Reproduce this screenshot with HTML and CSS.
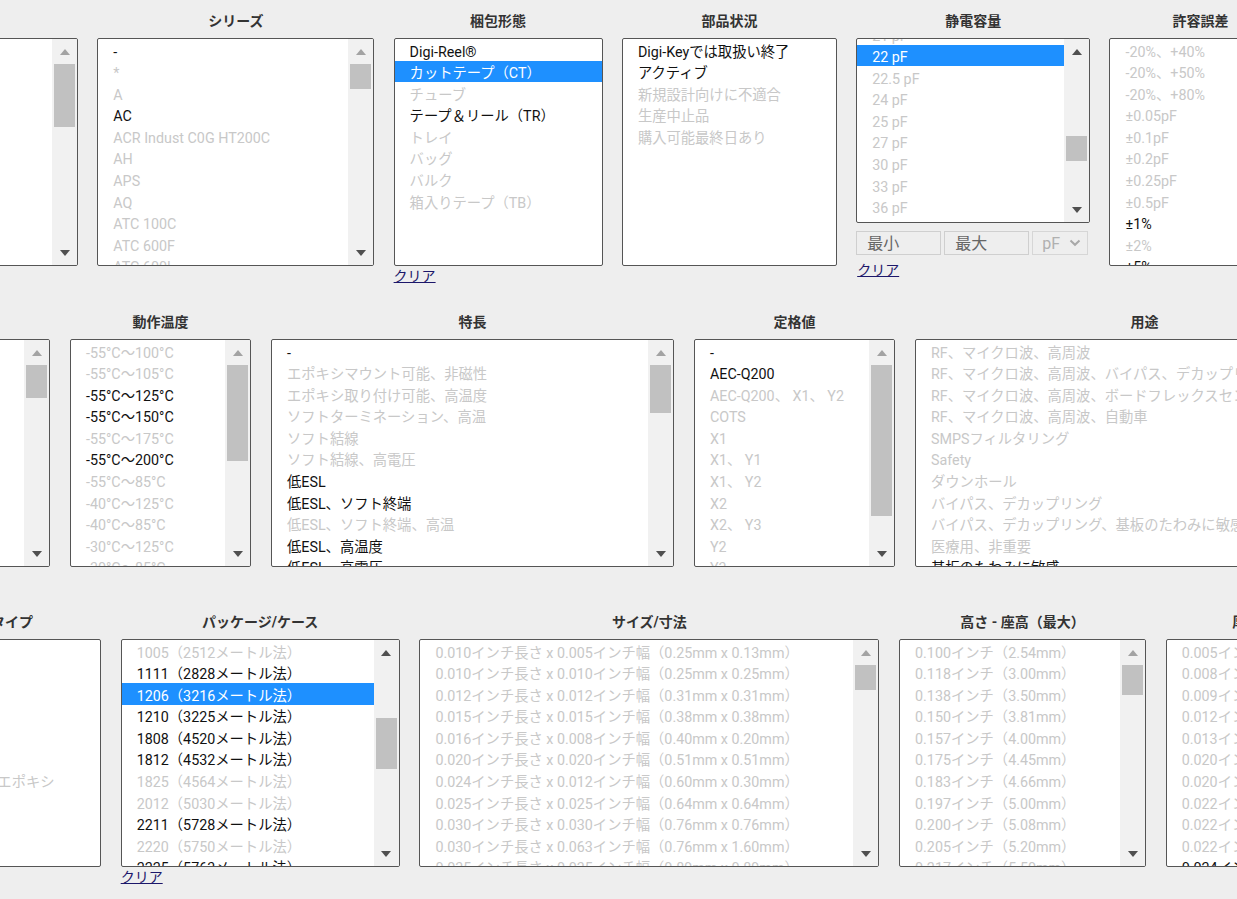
FILE: index.html
```html
<!DOCTYPE html>
<html lang="ja">
<head>
<meta charset="utf-8">
<title>フィルタ</title>
<link rel="stylesheet" href="styles.css">
</head>
<body>
<div class="page">

  <div class="row r1">
    <div class="panel w-mfr">
      <div class="ptitle">メーカー</div>
      <div class="box">
        <ul class="list">
          <li>AVX Corporation</li><li>Cal-Chip Electronics</li><li>Johanson Dielectrics</li><li class="on">KEMET</li><li>Knowles Novacap</li><li>Knowles Syfer</li><li class="on">KYOCERA AVX</li><li class="on">Murata Electronics</li><li>Taiyo Yuden</li><li>TDK Corporation</li><li>Vishay Vitramon</li>
        </ul>
        <div class="sb"><div class="sb-btn sb-up off"></div><div class="sb-track"><div class="thumb" style="margin-top:0;height:63px"></div></div><div class="sb-btn sb-down"></div></div>
      </div>
    </div>

    <div class="panel w-series">
      <div class="ptitle">シリーズ</div>
      <div class="box">
        <ul class="list">
          <li class="on">-</li><li>*</li><li>A</li><li class="on">AC</li><li>ACR Indust C0G HT200C</li><li>AH</li><li>APS</li><li>AQ</li><li>ATC 100C</li><li>ATC 600F</li><li>ATC 600L</li>
        </ul>
        <div class="sb"><div class="sb-btn sb-up off"></div><div class="sb-track"><div class="thumb" style="margin-top:0;height:25px"></div></div><div class="sb-btn sb-down"></div></div>
      </div>
    </div>

    <div class="panel w-pack">
      <div class="ptitle">梱包形態</div>
      <div class="box">
        <ul class="list">
          <li class="on">Digi-Reel®</li><li class="sel">カットテープ（CT）</li><li>チューブ</li><li class="on">テープ＆リール（TR）</li><li>トレイ</li><li>バッグ</li><li>バルク</li><li>箱入りテープ（TB）</li>
        </ul>
      </div>
      <a class="clear" href="#">クリア</a>
    </div>

    <div class="panel w-status">
      <div class="ptitle">部品状況</div>
      <div class="box">
        <ul class="list">
          <li class="on">Digi-Keyでは取扱い終了</li><li class="on">アクティブ</li><li>新規設計向けに不適合</li><li>生産中止品</li><li>購入可能最終日あり</li>
        </ul>
      </div>
    </div>

    <div class="panel w-cap">
      <div class="ptitle">静電容量</div>
      <div class="box short">
        <ul class="list shift">
          <li>21 pF</li><li class="sel">22 pF</li><li>22.5 pF</li><li>24 pF</li><li>25 pF</li><li>27 pF</li><li>30 pF</li><li>33 pF</li><li>36 pF</li>
        </ul>
        <div class="sb"><div class="sb-btn sb-up"></div><div class="sb-track"><div class="thumb" style="margin-top:72px;height:25px"></div></div><div class="sb-btn sb-down"></div></div>
      </div>
      <div class="range">
        <input class="inp inp-min" type="text" placeholder="最小">
        <input class="inp inp-max" type="text" placeholder="最大">
        <div class="unit">pF<svg class="chev" width="12" height="8" viewBox="0 0 12 8"><polyline points="1.5,1.5 6,5.8 10.5,1.5" fill="none" stroke="#a8a8a8" stroke-width="2"/></svg></div>
      </div>
      <a class="clear clear-cap" href="#">クリア</a>
    </div>

    <div class="panel w-tol">
      <div class="ptitle">許容誤差</div>
      <div class="box">
        <ul class="list">
          <li>-20%、+40%</li><li>-20%、+50%</li><li>-20%、+80%</li><li>±0.05pF</li><li>±0.1pF</li><li>±0.2pF</li><li>±0.25pF</li><li>±0.5pF</li><li class="on">±1%</li><li>±2%</li><li class="on">±5%</li>
        </ul>
        <div class="sb"><div class="sb-btn sb-up off"></div><div class="sb-track"><div class="thumb" style="margin-top:0;height:40px"></div></div><div class="sb-btn sb-down"></div></div>
      </div>
    </div>
  </div>

  <div class="row r2">
    <div class="panel w-tc">
      <div class="ptitle">温度係数</div>
      <div class="box">
        <ul class="list">
          <li>C0G、NP0</li><li>C0H</li><li>U2J</li><li>X5R</li><li>X6S</li><li>X7R</li><li>X7S</li><li>X8R</li><li>Y5V（F）</li><li>Z5U</li><li>BX</li>
        </ul>
        <div class="sb"><div class="sb-btn sb-up off"></div><div class="sb-track"><div class="thumb" style="margin-top:0;height:33px"></div></div><div class="sb-btn sb-down"></div></div>
      </div>
    </div>

    <div class="panel w-optemp">
      <div class="ptitle">動作温度</div>
      <div class="box">
        <ul class="list">
          <li>-55°C～100°C</li><li>-55°C～105°C</li><li class="on">-55°C～125°C</li><li class="on">-55°C～150°C</li><li>-55°C～175°C</li><li class="on">-55°C～200°C</li><li>-55°C～85°C</li><li>-40°C～125°C</li><li>-40°C～85°C</li><li>-30°C～125°C</li><li>-30°C～85°C</li>
        </ul>
        <div class="sb"><div class="sb-btn sb-up off"></div><div class="sb-track"><div class="thumb" style="margin-top:0;height:96px"></div></div><div class="sb-btn sb-down"></div></div>
      </div>
    </div>

    <div class="panel w-feat">
      <div class="ptitle">特長</div>
      <div class="box">
        <ul class="list">
          <li class="on">-</li><li>エポキシマウント可能、非磁性</li><li>エポキシ取り付け可能、高温度</li><li>ソフトターミネーション、高温</li><li>ソフト結線</li><li>ソフト結線、高電圧</li><li class="on">低ESL</li><li class="on">低ESL、ソフト終端</li><li>低ESL、ソフト終端、高温</li><li class="on">低ESL、高温度</li><li class="on">低ESL、高電圧</li>
        </ul>
        <div class="sb"><div class="sb-btn sb-up off"></div><div class="sb-track"><div class="thumb" style="margin-top:0;height:48px"></div></div><div class="sb-btn sb-down"></div></div>
      </div>
    </div>

    <div class="panel w-rating">
      <div class="ptitle">定格値</div>
      <div class="box">
        <ul class="list">
          <li class="on">-</li><li class="on">AEC-Q200</li><li>AEC-Q200、 X1、 Y2</li><li>COTS</li><li>X1</li><li>X1、 Y1</li><li>X1、 Y2</li><li>X2</li><li>X2、 Y3</li><li>Y2</li><li>Y3</li>
        </ul>
        <div class="sb"><div class="sb-btn sb-up off"></div><div class="sb-track"><div class="thumb" style="margin-top:0;height:151px"></div></div><div class="sb-btn sb-down"></div></div>
      </div>
    </div>

    <div class="panel w-app">
      <div class="ptitle">用途</div>
      <div class="box">
        <ul class="list">
          <li>RF、マイクロ波、高周波</li><li>RF、マイクロ波、高周波、バイパス、デカップリング</li><li>RF、マイクロ波、高周波、ボードフレックスセンシティブ</li><li>RF、マイクロ波、高周波、自動車</li><li>SMPSフィルタリング</li><li>Safety</li><li>ダウンホール</li><li>バイパス、デカップリング</li><li>バイパス、デカップリング、基板のたわみに敏感</li><li>医療用、非重要</li><li class="on">基板のたわみに敏感</li>
        </ul>
        <div class="sb"><div class="sb-btn sb-up off"></div><div class="sb-track"><div class="thumb" style="margin-top:0;height:60px"></div></div><div class="sb-btn sb-down"></div></div>
      </div>
    </div>
  </div>

  <div class="row r3">
    <div class="panel w-mount">
      <div class="ptitle">取り付けタイプ</div>
      <div class="box">
        <ul class="list">
          <li>シャーシマウント</li><li>スルーホール</li><li>フリーハンギング</li><li>パネルマウント</li><li>表面実装</li><li>表面実装、MLCC</li><li>表面実装、導電性エポキシ</li><li>表面実装、直角</li><li>表面実装、逆配置</li><li>表面実装、薄型</li>
        </ul>
      </div>
    </div>

    <div class="panel w-pkg">
      <div class="ptitle">パッケージ/ケース</div>
      <div class="box">
        <ul class="list">
          <li>1005（2512メートル法）</li><li class="on">1111（2828メートル法）</li><li class="sel">1206（3216メートル法）</li><li class="on">1210（3225メートル法）</li><li class="on">1808（4520メートル法）</li><li class="on">1812（4532メートル法）</li><li>1825（4564メートル法）</li><li>2012（5030メートル法）</li><li class="on">2211（5728メートル法）</li><li>2220（5750メートル法）</li><li class="on">2225（5763メートル法）</li>
        </ul>
        <div class="sb"><div class="sb-btn sb-up"></div><div class="sb-track"><div class="thumb" style="margin-top:53px;height:51px"></div></div><div class="sb-btn sb-down"></div></div>
      </div>
      <a class="clear" href="#">クリア</a>
    </div>

    <div class="panel w-size">
      <div class="ptitle">サイズ/寸法</div>
      <div class="box">
        <ul class="list">
          <li>0.010インチ長さ x 0.005インチ幅（0.25mm x 0.13mm）</li>
          <li>0.010インチ長さ x 0.010インチ幅（0.25mm x 0.25mm）</li>
          <li>0.012インチ長さ x 0.012インチ幅（0.31mm x 0.31mm）</li>
          <li>0.015インチ長さ x 0.015インチ幅（0.38mm x 0.38mm）</li>
          <li>0.016インチ長さ x 0.008インチ幅（0.40mm x 0.20mm）</li>
          <li>0.020インチ長さ x 0.020インチ幅（0.51mm x 0.51mm）</li>
          <li>0.024インチ長さ x 0.012インチ幅（0.60mm x 0.30mm）</li>
          <li>0.025インチ長さ x 0.025インチ幅（0.64mm x 0.64mm）</li>
          <li>0.030インチ長さ x 0.030インチ幅（0.76mm x 0.76mm）</li>
          <li>0.030インチ長さ x 0.063インチ幅（0.76mm x 1.60mm）</li>
          <li>0.035インチ長さ x 0.035インチ幅（0.89mm x 0.89mm）</li>
        </ul>
        <div class="sb"><div class="sb-btn sb-up off"></div><div class="sb-track"><div class="thumb" style="margin-top:0;height:25px"></div></div><div class="sb-btn sb-down"></div></div>
      </div>
    </div>

    <div class="panel w-height">
      <div class="ptitle">高さ - 座高（最大）</div>
      <div class="box">
        <ul class="list">
          <li>0.100インチ（2.54mm）</li><li>0.118インチ（3.00mm）</li><li>0.138インチ（3.50mm）</li><li>0.150インチ（3.81mm）</li><li>0.157インチ（4.00mm）</li><li>0.175インチ（4.45mm）</li><li>0.183インチ（4.66mm）</li><li>0.197インチ（5.00mm）</li><li>0.200インチ（5.08mm）</li><li>0.205インチ（5.20mm）</li><li>0.217インチ（5.50mm）</li>
        </ul>
        <div class="sb"><div class="sb-btn sb-up off"></div><div class="sb-track"><div class="thumb" style="margin-top:0;height:30px"></div></div><div class="sb-btn sb-down"></div></div>
      </div>
    </div>

    <div class="panel w-thick">
      <div class="ptitle">厚さ（最大）</div>
      <div class="box">
        <ul class="list">
          <li>0.005インチ（0.13mm）</li><li>0.008インチ（0.20mm）</li><li>0.009インチ（0.23mm）</li><li>0.012インチ（0.30mm）</li><li>0.013インチ（0.33mm）</li><li>0.020インチ（0.50mm）</li><li>0.020インチ（0.51mm）</li><li>0.022インチ（0.55mm）</li><li>0.022インチ（0.56mm）</li><li>0.022インチ（0.57mm）</li><li class="on">0.024インチ（0.60mm）</li>
        </ul>
        <div class="sb"><div class="sb-btn sb-up off"></div><div class="sb-track"><div class="thumb" style="margin-top:0;height:28px"></div></div><div class="sb-btn sb-down"></div></div>
      </div>
    </div>
  </div>

</div>
</body>
</html>
```
FILE: styles.css
```css
html, body {
  margin: 0;
  padding: 0;
  overflow: hidden;
  background: #eeeeee;
}

body {
  width: 1237px;
  height: 899px;
  font-family: Roboto, "Noto Sans CJK JP", sans-serif;
  font-size: 14px;
  color: #111;
}

.page {
  width: 1237px;
  height: 899px;
  overflow: hidden;
}

.row {
  display: flex;
  align-items: flex-start;
  box-sizing: border-box;
  height: 300px;
  padding-top: 11px;
}

.r1 { height: 301px; gap: 19.3px; margin-left: -172px; }
.r2 { gap: 20px; margin-left: -150px; }
.r3 { gap: 19.7px; margin-left: -133px; }

.panel {
  flex: none;
  display: flex;
  flex-direction: column;
}

.w-mfr { width: 250px; }
.w-series { width: 277px; }
.w-pack { width: 209px; }
.w-status { width: 215px; }
.w-cap { width: 234px; }
.w-tol { width: 182px; }

.w-tc { width: 200px; }
.w-optemp { width: 181px; }
.w-feat { width: 403px; }
.w-rating { width: 201px; }
.w-app { width: 459px; }

.w-mount { width: 234px; }
.w-pkg { width: 279px; }
.w-size { width: 460px; }
.w-height { width: 247px; }
.w-thick { width: 217px; }

.ptitle {
  height: 20px;
  line-height: 20px;
  margin-bottom: 7px;
  text-align: center;
  font-weight: bold;
  color: #333;
  white-space: nowrap;
}

.box {
  box-sizing: border-box;
  height: 228px;
  border: 1px solid #555;
  border-radius: 2px;
  background: #fff;
  display: flex;
  overflow: hidden;
}

.box.short { height: 185px; }

.list {
  flex: 1;
  min-width: 0;
  margin: 0;
  padding: 0;
  list-style: none;
  overflow: hidden;
}

.list.shift { margin-top: -16px; }

.list li {
  box-sizing: border-box;
  height: 21.6px;
  line-height: 21.6px;
  padding-top: 2.5px;
  padding-left: 15px;
  white-space: nowrap;
  font-size: 14.3px;
  color: #c8c8c8;
}

.list li.on { color: #111; }

.list li.sel {
  background: #1e90ff;
  color: #fff;
}

.sb {
  flex: none;
  width: 25px;
  background: #f1f1f1;
  display: flex;
  flex-direction: column;
}

.sb-btn {
  flex: none;
  height: 25px;
  display: flex;
  align-items: center;
  justify-content: center;
}

.sb-btn::before {
  content: "";
  width: 0;
  height: 0;
  border-left: 5.5px solid transparent;
  border-right: 5.5px solid transparent;
}

.sb-up::before { border-bottom: 6px solid #505050; }
.sb-up.off::before { border-bottom-color: #a3a3a3; }
.sb-down::before { border-top: 6px solid #505050; }

.sb-track {
  flex: 1;
  min-height: 0;
}

.thumb {
  margin-left: 2px;
  width: 21px;
  background: #c1c1c1;
}

.clear {
  align-self: flex-start;
  display: block;
  line-height: 20px;
  color: #1c176a;
  text-decoration: underline;
}

.clear-cap { margin-top: 5px; margin-left: 1px; }

.range {
  display: flex;
  gap: 3px;
  margin-top: 8px;
  height: 24px;
}

.inp {
  box-sizing: border-box;
  height: 24px;
  width: 85px;
  margin: 0;
  padding: 0 0 0 10px;
  border: 1px solid #cfcfcf;
  background: #eeeeee;
  font-family: Roboto, "Noto Sans CJK JP", sans-serif;
  font-size: 16px;
  color: #555;
  outline: none;
}

.inp::placeholder { color: #666; }

.unit {
  box-sizing: border-box;
  width: 56px;
  height: 24px;
  border: 1px solid #d6d6d6;
  background: #eeeeee;
  display: flex;
  align-items: center;
  padding-left: 9px;
  gap: 9px;
  font-size: 16px;
  color: #b0b0b0;
}

.chev { flex: none; }
```
